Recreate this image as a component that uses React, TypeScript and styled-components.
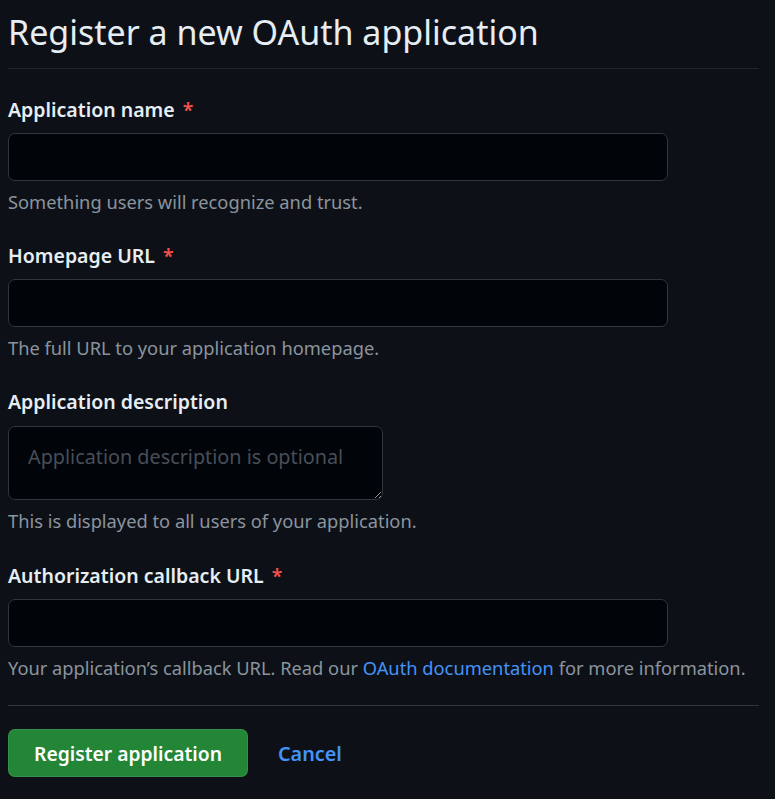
import React from 'react';
import styled, { createGlobalStyle } from 'styled-components';

const GlobalStyle = createGlobalStyle`
  html, body {
    margin: 0;
    padding: 0;
    background: #0d1117;
  }
  body {
    font-family: "Noto Sans", "Liberation Sans", sans-serif;
    color: #e6edf3;
  }
`;

const Page = styled.div`
  padding: 0 8px;
  width: 767px;
  box-sizing: border-box;
`;

const Subhead = styled.div`
  padding: 6px 0 10px;
  border-bottom: 1px solid #21262d;
  margin-bottom: 27px;
`;

const Heading = styled.h1`
  margin: 0;
  font-size: 34px;
  font-weight: 400;
  line-height: 52px;
  color: #e6edf3;
`;

const Form = styled.form`
  display: flex;
  flex-direction: column;
`;

const FormGroup = styled.div<{ $tall?: boolean }>`
  display: flex;
  flex-direction: column;
  margin-bottom: ${p => (p.$tall ? 28 : 27)}px;
`;

const Label = styled.label`
  font-size: 19.5px;
  font-weight: 600;
  line-height: 28px;
  margin-bottom: 9px;
  color: #e6edf3;
`;

const Required = styled.span`
  color: #f85149;
  margin-left: 8px;
`;

const Input = styled.input`
  width: 660px;
  height: 48px;
  box-sizing: border-box;
  background: #010409;
  border: 1px solid #30363d;
  border-radius: 7px;
  color: #e6edf3;
  font: inherit;
  padding: 0 19px;
  outline: none;
`;

const TextArea = styled.textarea`
  width: 375px;
  height: 74px;
  box-sizing: border-box;
  margin: 1px 0 0;
  background: #010409;
  border: 1px solid #30363d;
  border-radius: 7px;
  color: #e6edf3;
  font-family: inherit;
  font-size: 19.8px;
  line-height: 28px;
  padding: 16px 19px;
  outline: none;
  display: block;

  &::placeholder {
    color: #484f58;
  }
`;

const Note = styled.p`
  margin: 8px 0 0;
  font-size: 18.3px;
  line-height: 26px;
  color: #8b949e;
  white-space: nowrap;
`;

const Link = styled.a`
  color: #4493f8;
  text-decoration: none;
`;

const Divider = styled.hr`
  border: 0;
  border-top: 1px solid #30363d;
  margin: -3px 0 23px;
`;

const Actions = styled.div`
  display: flex;
  align-items: center;
  gap: 30px;
`;

const PrimaryButton = styled.button`
  width: 240px;
  height: 48px;
  background: #238636;
  border: 1px solid rgba(240, 246, 252, 0.1);
  border-radius: 7px;
  color: #ffffff;
  font-family: inherit;
  font-size: 19.3px;
  font-weight: 600;
  cursor: pointer;
`;

const CancelLink = styled.a`
  color: #4493f8;
  font-size: 19.8px;
  font-weight: 600;
  text-decoration: none;
`;

type Field = {
  label: string;
  note: React.ReactNode;
  required?: boolean;
  multiline?: boolean;
  placeholder?: string;
};

const fields: Field[] = [
  { label: 'Application name', note: 'Something users will recognize and trust.', required: true },
  { label: 'Homepage URL', note: 'The full URL to your application homepage.', required: true },
  {
    label: 'Application description',
    note: 'This is displayed to all users of your application.',
    multiline: true,
    placeholder: 'Application description is optional',
  },
  {
    label: 'Authorization callback URL',
    note: (
      <>
        Your application’s callback URL. Read our <Link href="#">OAuth documentation</Link> for more information.
      </>
    ),
    required: true,
  },
];

const App: React.FC = () => {
  return (
    <Page>
      <GlobalStyle />
      <Subhead>
        <Heading>Register a new OAuth application</Heading>
      </Subhead>
      <Form onSubmit={e => e.preventDefault()}>
        {fields.map(field => (
          <FormGroup key={field.label} $tall={field.multiline}>
            <Label>
              {field.label}
              {field.required && <Required>*</Required>}
            </Label>
            {field.multiline ? (
              <TextArea placeholder={field.placeholder} />
            ) : (
              <Input type="text" />
            )}
            <Note>{field.note}</Note>
          </FormGroup>
        ))}
        <Divider />
        <Actions>
          <PrimaryButton type="submit">Register application</PrimaryButton>
          <CancelLink href="#">Cancel</CancelLink>
        </Actions>
      </Form>
    </Page>
  );
};

export default App;
